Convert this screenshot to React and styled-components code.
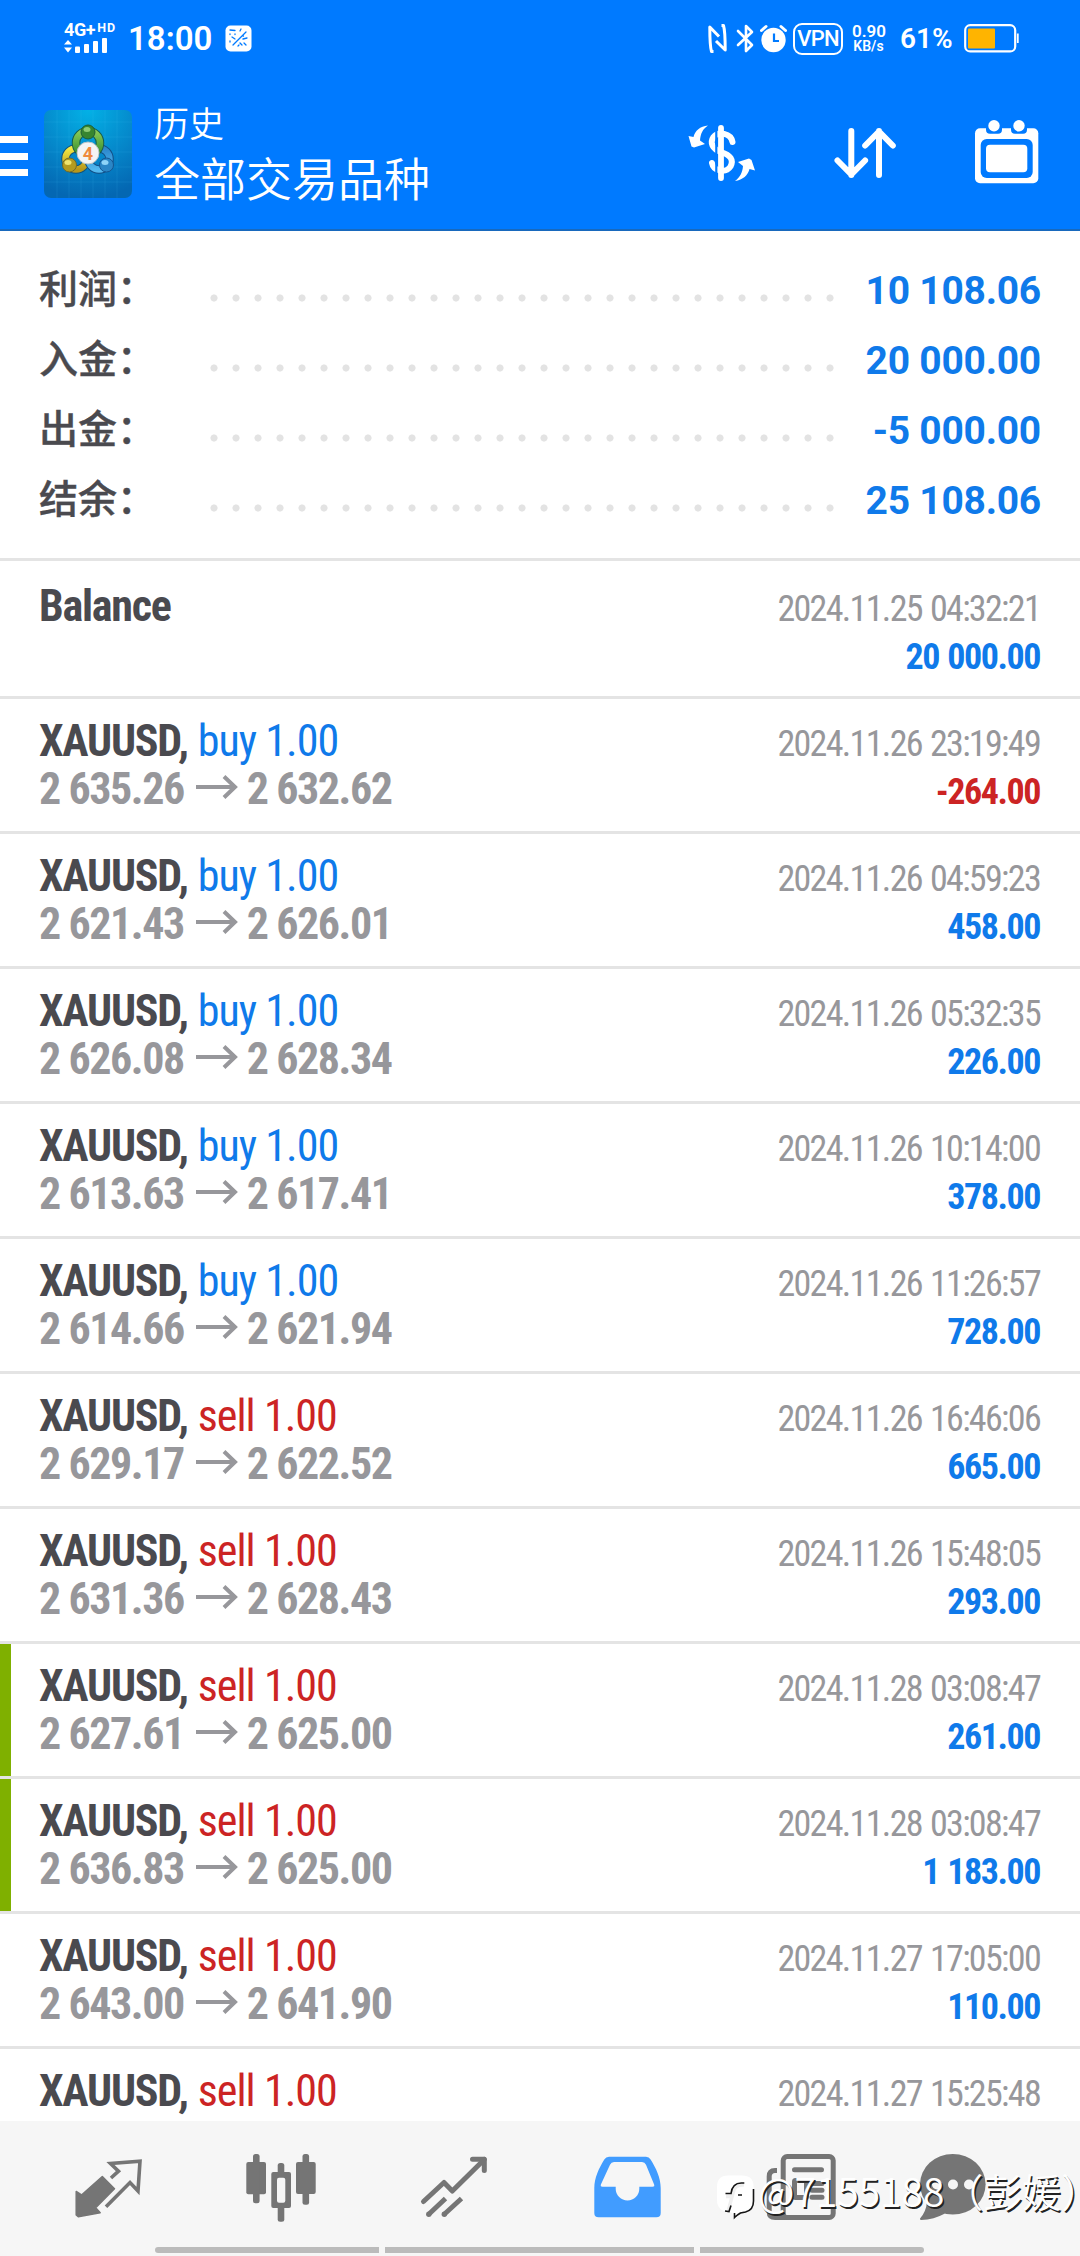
import React from "react";
import styled, { createGlobalStyle } from "styled-components";

const GlobalStyle = createGlobalStyle`
  * {
    box-sizing: border-box;
  }

  body {
    margin: 0;
    background: #fff;
    font-family: Roboto, "Noto Sans CJK SC", sans-serif;
  }

  svg {
    display: block;
    flex: none;
  }
`;

const Screen = styled.div`
  position: relative;
  display: flex;
  flex-direction: column;
  width: 1080px;
  height: 2256px;
  overflow: hidden;
  background: #fff;
`;

/* ---------- header ---------- */

const Header = styled.header`
  flex: none;
  height: 231px;
  background: #007aff;
  border-bottom: 2px solid #1869bd;
  color: #fff;
`;

const StatusBar = styled.div`
  display: flex;
  align-items: center;
  justify-content: space-between;
  height: 79px;
  padding: 0 61px 2px 64px;
`;

const StatusGroup = styled.div`
  display: flex;
  align-items: center;
`;

const Signal = styled.div`
  width: 54px;
  margin-right: 10px;
`;

const Network = styled.div`
  display: flex;
  align-items: flex-start;
  height: 14px;
  font-size: 18px;
  font-weight: 700;
  line-height: 14px;
  letter-spacing: -0.4px;
  white-space: nowrap;

  small {
    margin-left: 2px;
    font-size: 12.5px;
    line-height: 9px;
    letter-spacing: 0.9px;
  }
`;

const Clock = styled.span`
  width: 97px;
  font-size: 33px;
  font-weight: 600;
  line-height: 40px;
`;

const Vpn = styled.div`
  display: flex;
  align-items: center;
  justify-content: center;
  width: 50px;
  height: 32px;
  margin: 0 9px 0 6px;
  border: 2.5px solid #fff;
  border-radius: 9px;
  font-size: 22px;
  font-weight: 500;
  letter-spacing: -0.8px;
`;

const Speed = styled.div`
  width: 33px;
  margin-right: 15px;
  font-size: 17px;
  font-weight: 600;
  line-height: 16px;
  text-align: center;
  white-space: nowrap;

  small {
    display: block;
    font-size: 14px;
    line-height: 15px;
  }
`;

const Percent = styled.span`
  width: 64px;
  font-size: 28px;
  font-weight: 600;
`;

const Toolbar = styled.div`
  display: flex;
  align-items: center;
  height: 150px;
  padding-right: 38px;
`;

const MenuButton = styled.div`
  display: flex;
  flex-direction: column;
  justify-content: space-between;
  width: 28px;
  height: 41px;
  margin: 3px 16px 0 0;
  padding-top: 1px;

  i {
    height: 7px;
    background: #fff;
  }
`;

const Title = styled.div`
  flex: 1;
  margin-left: 22px;
  padding-bottom: 6px;
  font-family: "Noto Sans CJK SC", sans-serif;
  font-weight: 350;
`;

const Section = styled.div`
  font-size: 35px;
  line-height: 50px;
`;

const Filter = styled.div`
  font-size: 46px;
  line-height: 58px;
`;

const Actions = styled.div`
  display: flex;
  gap: 72px;
`;

/* ---------- summary ---------- */

const Summary = styled.section`
  flex: none;
  padding: 25px 39px 22px 39px;
  border-bottom: 3px solid #e4e4e4;
`;

const SummaryRow = styled.div`
  display: flex;
  align-items: center;
  height: 70px;
`;

const SummaryLabel = styled.span`
  width: 164px;
  padding-bottom: 10px;
  font-family: "Noto Sans CJK SC", sans-serif;
  font-size: 39px;
  font-weight: 500;
  line-height: 58px;
  color: #4a4a4f;
  -webkit-text-stroke: 0.4px #4a4a4f;
`;

const Dots = styled.span`
  width: 638px;
  height: 8px;
  margin-top: 13px;
  background: radial-gradient(circle, #e3e3e3 3.2px, transparent 3.9px) 0 0 / 22px 8px;
`;

const SummaryValue = styled.span`
  flex: 1;
  font-size: 39px;
  font-weight: 700;
  line-height: 70px;
  letter-spacing: -0.25px;
  text-align: right;
  white-space: nowrap;
  color: #0f7aea;
`;

/* ---------- deals ---------- */

const Deals = styled.section`
  flex: 1;
  min-height: 0;
  overflow: hidden;
  font-family: "Roboto Condensed", Roboto, sans-serif;
  font-stretch: 75%;
  line-height: 48px;
  white-space: nowrap;
`;

const Deal = styled.div`
  display: flex;
  align-items: baseline;
  justify-content: space-between;
  height: ${(props) => (props.$first ? 138 : 135)}px;
  padding: ${(props) => (props.$first ? 21 : 18)}px 40px 0 39px;
  border-bottom: 3px solid #e4e4e4;
  background: ${(props) =>
    props.$marked ? "linear-gradient(#7fb000, #7fb000) 0 0 / 11px 100% no-repeat" : "#fff"};
`;

const DealInfo = styled.div`
  font-size: 44px;
`;

const Symbol = styled.div`
  font-weight: 700;
  letter-spacing: -1.25px;
  color: #4a4a4f;

  span {
    margin-left: 1px;
    font-weight: 400;
    letter-spacing: -0.95px;
    color: ${(props) => (props.$side === "buy" ? "#0f7aea" : "#cc2424")};
  }
`;

const Prices = styled.div`
  display: flex;
  font-weight: 700;
  letter-spacing: -1.45px;
  color: #97979b;

  svg {
    margin: 10px 8px 0 11px;
  }
`;

const DealResult = styled.div`
  font-size: 36px;
  letter-spacing: -1.67px;
  word-spacing: 1.5px;
  text-align: right;
  color: #97979b;
`;

const Profit = styled.div`
  font-weight: 700;
  letter-spacing: -1.45px;
  color: ${(props) => (props.$loss ? "#cc2424" : "#0f7aea")};
`;

/* ---------- bottom ---------- */

const BottomBar = styled.nav`
  flex: none;
  height: 135px;
  background: #f6f6f6;
  color: #757575;
`;

const Tabs = styled.div`
  display: grid;
  grid-template-columns: repeat(5, 172px) 132px;
  column-gap: 1px;
  justify-items: center;
  height: 126px;
  padding: 27px 0 0 22px;
`;

const ScrollHint = styled.div`
  display: grid;
  grid-template-columns: 224px 309px 224px;
  column-gap: 6px;
  height: 6px;
  padding-left: 155px;

  i {
    background: #bbb;
  }
  i:first-child {
    border-radius: 3px 0 0 3px;
  }
  i:last-child {
    border-radius: 0 3px 3px 0;
  }
`;

const Watermark = styled.div`
  position: absolute;
  left: 714px;
  top: 2162px;
  display: flex;
  align-items: center;
  height: 56px;
  font-family: "Noto Sans CJK SC", sans-serif;
  font-size: 39px;
  font-weight: 350;
  line-height: 56px;
  white-space: nowrap;
  color: #fff;
  text-shadow: 1.5px 1.5px 0 #222;

  svg {
    margin: 10px 2px 0 0;
  }

  /* half-width closing bracket, so it stays inside the screen */
  span {
    font-feature-settings: "halt";
  }
`;

const summary = [
  { label: "利润：", value: "10 108.06" },
  { label: "入金：", value: "20 000.00" },
  { label: "出金：", value: "-5 000.00" },
  { label: "结余：", value: "25 108.06" },
];

const deals = [
  { symbol: "Balance", date: "2024.11.25 04:32:21", profit: "20 000.00" },
  { side: "buy", open: "2 635.26", close: "2 632.62", date: "2024.11.26 23:19:49", profit: "-264.00" },
  { side: "buy", open: "2 621.43", close: "2 626.01", date: "2024.11.26 04:59:23", profit: "458.00" },
  { side: "buy", open: "2 626.08", close: "2 628.34", date: "2024.11.26 05:32:35", profit: "226.00" },
  { side: "buy", open: "2 613.63", close: "2 617.41", date: "2024.11.26 10:14:00", profit: "378.00" },
  { side: "buy", open: "2 614.66", close: "2 621.94", date: "2024.11.26 11:26:57", profit: "728.00" },
  { side: "sell", open: "2 629.17", close: "2 622.52", date: "2024.11.26 16:46:06", profit: "665.00" },
  { side: "sell", open: "2 631.36", close: "2 628.43", date: "2024.11.26 15:48:05", profit: "293.00" },
  { side: "sell", open: "2 627.61", close: "2 625.00", date: "2024.11.28 03:08:47", profit: "261.00", marked: true },
  { side: "sell", open: "2 636.83", close: "2 625.00", date: "2024.11.28 03:08:47", profit: "1 183.00", marked: true },
  { side: "sell", open: "2 643.00", close: "2 641.90", date: "2024.11.27 17:05:00", profit: "110.00" },
  { side: "sell", date: "2024.11.27 15:25:48" },
];

/* ---------- icons ---------- */

const SignalBars = () => (
  <svg width="54" height="17" viewBox="0 0 54 17" fill="#fff">
    <path d="M0 7.500 4 3l4 4.500zM0 10.500h8L4 15.500z" />
    <rect x="11" y="9.500" width="5" height="6.500" rx="1" />
    <rect x="20" y="7" width="5" height="9" rx="1" />
    <rect x="29" y="4" width="5" height="12" rx="1" />
    <rect x="38" y="1" width="5" height="15" rx="1" />
  </svg>
);

const NoticeIcon = () => (
  <svg width="27" height="27" viewBox="0 0 27 27">
    <rect x="0.500" y="0.500" width="26" height="26" rx="5" fill="#fff" />
    <g stroke="#007aff" strokeWidth="1.300" fill="none" strokeLinecap="round">
      <path d="M5 5l5 .5M16 4l-1 2M21 7l-8 8-5 5M22 13l-4 1M7 12l3 2M15 18l2 2M19 18l2 2" />
      <path d="M5 9v.5M5 16v1M10 9v.5M18 11h.5M13 21l1-1" />
    </g>
  </svg>
);

const NfcIcon = () => (
  <svg width="19" height="29" viewBox="0 0 19 29" fill="none" stroke="#fff" strokeWidth="3" strokeLinejoin="round">
    <path d="M5.500 27.500h-2C1.800 22 1.800 8 1.800 3L11 12.500" />
    <path d="M13.500 1.500h2c1.700 5.500 1.700 19.500 1.700 24.500L8 17" />
  </svg>
);

const BluetoothIcon = () => (
  <svg width="19" height="29" viewBox="0 0 19 29" fill="none" stroke="#fff" strokeWidth="2.600" strokeLinejoin="round" strokeLinecap="round">
    <path d="M2 7l14 14-6 6V2l6 6L2 21" />
  </svg>
);

const AlarmIcon = () => (
  <svg width="27" height="29" viewBox="0 0 27 29">
    <circle cx="13.500" cy="16" r="12.200" fill="#fff" />
    <path d="M1.500 6.500 6 2.500M25.500 6.500 21 2.500" stroke="#fff" strokeWidth="3" strokeLinecap="round" />
    <path d="M14 9.500V17h5" stroke="#007aff" strokeWidth="2.200" fill="none" />
  </svg>
);

const BatteryIcon = () => (
  <svg width="55" height="29" viewBox="0 0 55 29">
    <rect x="1.200" y="1.200" width="50" height="26.200" rx="5" fill="none" stroke="#fff" strokeWidth="2.200" />
    <rect x="4" y="4.500" width="27" height="20" rx="1" fill="#ffb400" />
    <path d="M53.800 9.500v9.500" stroke="#fff" strokeWidth="1.800" />
  </svg>
);

const Logo = () => (
  <svg width="88" height="88" viewBox="0 0 88 88">
    <defs>
      <radialGradient id="logoBg" cx="0.500" cy="0" r="1">
        <stop offset="0" stopColor="#03b1e6" />
        <stop offset="0.600" stopColor="#0584c8" />
        <stop offset="1" stopColor="#0467b2" />
      </radialGradient>
      <linearGradient id="green" x1="0" y1="0" x2="0" y2="1">
        <stop offset="0" stopColor="#8acb58" />
        <stop offset="1" stopColor="#318b2d" />
      </linearGradient>
      <linearGradient id="yellow" x1="0" y1="0" x2="0" y2="1">
        <stop offset="0" stopColor="#f3e843" />
        <stop offset="1" stopColor="#b8971a" />
      </linearGradient>
      <linearGradient id="blue" x1="0" y1="0" x2="0" y2="1">
        <stop offset="0" stopColor="#2b86cc" />
        <stop offset="1" stopColor="#52b8ef" />
      </linearGradient>
    </defs>
    <rect width="88" height="88" rx="7" fill="url(#logoBg)" />
    <path
      d="M13 0v88M25 0v88M37 0v88M49 0v88M61 0v88M73 0v88M0 12h88M0 27h88M0 42h88M0 57h88M0 72h88"
      stroke="#5ccdf5"
      strokeOpacity="0.120"
    />
    <g fill="none">
      <circle cx="32" cy="49" r="10.500" stroke="#12537c" strokeWidth="8.500" />
      <circle cx="32" cy="49" r="10.500" stroke="url(#yellow)" strokeWidth="6.500" />
      <circle cx="55" cy="49" r="10.500" stroke="#124f86" strokeWidth="8.500" />
      <circle cx="55" cy="49" r="10.500" stroke="url(#blue)" strokeWidth="6.500" />
      <circle cx="44" cy="33" r="12" stroke="#165c4c" strokeWidth="8.500" />
      <circle cx="44" cy="33" r="12" stroke="url(#green)" strokeWidth="6.500" />
    </g>
    <circle cx="44" cy="22" r="7" fill="#37852f" stroke="#1c5e37" />
    <ellipse cx="43" cy="19.500" rx="3.500" ry="2.500" fill="#8cca73" />
    <circle cx="25.500" cy="55" r="7" fill="#b29b20" stroke="#6d6a2d" />
    <ellipse cx="24" cy="52.500" rx="3.500" ry="2.500" fill="#eee36d" />
    <circle cx="62.500" cy="55" r="7" fill="#2a86c6" stroke="#155590" />
    <ellipse cx="61" cy="52.500" rx="3.500" ry="2.500" fill="#8ed4f8" />
    <circle cx="44" cy="43" r="11" fill="#f4f4f4" stroke="#b9c4c8" />
    <text x="44" y="49.500" textAnchor="middle" fontFamily="Roboto" fontSize="18" fontWeight="700" fill="#ef8a3c">
      4
    </text>
  </svg>
);

const CurrencyIcon = () => (
  <svg width="70" height="70" viewBox="2 0 70 70">
    <path
      d="M46.500 23C45 14 32 12 27.500 18c-4 6-1 12 7.500 15 9.500 3 13 8 9.500 14.500-4.500 7-17 5-18.500-3.500"
      fill="none"
      stroke="#fff"
      strokeWidth="6"
      strokeLinecap="round"
    />
    <path d="M30.300 3v62" stroke="#007aff" strokeWidth="2.200" />
    <path d="M35 9v50" stroke="#fff" strokeWidth="5.800" strokeLinecap="round" />
    <path d="M22 6.500C14 7 9 12 7.500 18L2.500 17l3 10.500 2.500 1 11-3.500-5-3.500C14.500 15 16.500 10 22 6.500z" fill="#fff" />
    <path d="M49 62c8-1 13-6 14.500-12l5.500 1.500L65.500 41l-2.500-1.500L52 43l5 4C56.500 53 54.500 58 49 62z" fill="#fff" />
  </svg>
);

const SortIcon = () => (
  <svg width="70" height="70" viewBox="0 0 70 70" fill="none" stroke="#fff" strokeWidth="6" strokeLinecap="round" strokeLinejoin="round">
    <path d="M21.300 12v44M7.500 41.500l13.800 14 13.800-14" />
    <path d="M49 56V12M35.200 26.500 49 12.500l13.800 14" />
  </svg>
);

const CalendarIcon = () => (
  <svg width="70" height="70" viewBox="0 0 70 70" overflow="visible">
    <rect x="3" y="9.300" width="63.300" height="55" rx="5" fill="#fff" />
    <g fill="#007aff">
      <rect x="8.700" y="20" width="52" height="39" rx="6" />
      <rect x="14" y="4" width="16" height="10.700" rx="4" />
      <rect x="39" y="4" width="16" height="10.700" rx="4" />
    </g>
    <circle cx="22" cy="6.800" r="5.700" fill="#fff" />
    <circle cx="47" cy="6.800" r="5.700" fill="#fff" />
    <rect x="14" y="25.700" width="41.300" height="27.600" rx="4" fill="#fff" />
  </svg>
);

const PriceArrow = () => (
  <svg width="44" height="24" viewBox="0 0 44 24" fill="none" stroke="#97979b" strokeWidth="4">
    <path d="M1 12h39M29 1.500 40 12 29 22.500" />
  </svg>
);

const TabIcon = ({ children }) => (
  <svg width="80" height="80" viewBox="0 0 80 80" fill="currentColor">
    {children}
  </svg>
);

const QuotesIcon = () => (
  <TabIcon>
    <path
      d="M34.300 28.500 46.500 40.800 27.700 59.700 32.200 64.700 10.300 68.800 8.200 67V43.500L13.500 47z"
      stroke="currentColor"
      strokeWidth="1.500"
      strokeLinejoin="round"
    />
    <path d="M43 30l7.500-6.800-8-7.700L72 13.200l-2 29.800-8-8.500L38 58.700" fill="none" stroke="currentColor" strokeWidth="3.600" />
  </TabIcon>
);

const ChartIcon = () => (
  <TabIcon>
    <rect x="5.300" y="14" width="19.700" height="32.300" rx="2" />
    <rect x="12" y="6" width="6.600" height="49.300" rx="2.500" />
    <rect x="61.500" y="6" width="6.600" height="50.700" rx="2.500" />
    <rect x="55" y="14" width="19.700" height="32" rx="2" />
    <rect x="36.700" y="15" width="6.600" height="58.700" rx="2.500" />
    <rect x="30.300" y="24" width="19.700" height="36" rx="2" />
    <rect x="36" y="29.700" width="8.300" height="25" rx="2" fill="#f6f6f6" />
  </TabIcon>
);

const TradeIcon = () => (
  <TabIcon>
    <g fill="none" stroke="currentColor" strokeWidth="5" strokeLinejoin="round">
      <path d="M9.500 53.500 30 34.500 38.300 43 70.300 11.500" strokeLinecap="round" />
      <path d="M58.500 11.300h11.800v11.300" strokeLinecap="round" />
      <path d="M14.500 66.500 31.500 50.500M30 66.500 47.500 50.500" />
    </g>
    <circle cx="14.800" cy="66.300" r="2.700" />
    <circle cx="30.300" cy="66.300" r="2.700" />
  </TabIcon>
);

const HistoryIcon = () => (
  <TabIcon>
    <path
      fill="#419cff"
      fillRule="evenodd"
      d="M22 8.700h37q3 0 4.600 2.800C69 20 73.700 30 73.700 40v25q0 4.300-4.300 4.300H11.600q-4.300 0-4.300-4.300V40c0-10 4.700-20 10-28.500Q19 8.700 22 8.700zM27 14q-2.800 0-4 2.800l-9 19.400q-1 2.500 1.500 2.500h13.200v2a11.800 11.800 0 0 0 23.600 0v-2h13.200q2.500 0 1.500-2.500L59 16.800Q57.800 14 55 14z"
    />
  </TabIcon>
);

const NewsIcon = () => (
  <TabIcon>
    <g fill="none" stroke="currentColor" strokeWidth="5">
      <path d="M17 22.500h-2q-5.800 0-5.800 6V64q0 5.500 6 5.500h13" />
      <rect x="23.200" y="8.500" width="50" height="61" rx="4" />
      <path d="M34.500 21.700h27M52 35.500h10M52 42.300h10M52 49.200h10" strokeLinecap="round" />
      <rect x="34.500" y="32.500" width="12" height="17" rx="1" />
    </g>
  </TabIcon>
);

const ChatIcon = () => (
  <TabIcon>
    <ellipse cx="39.800" cy="36.300" rx="32.800" ry="30.300" />
    <path d="M14 54q-1 10-7 16.500 0 1.500 1 1.500 13-.500 24-6.500z" />
    <g fill="#f6f6f6">
      <circle cx="24" cy="36.500" r="5" />
      <circle cx="40" cy="36.500" r="5" />
      <circle cx="56" cy="36.500" r="5" />
    </g>
  </TabIcon>
);

const WatermarkIcon = () => (
  <svg width="42" height="50" viewBox="0 0 42 50">
    <path d="M14 5.500h14q11.500 0 11.500 11v13q0 9-8 11.500l-6 1.500-5 5-3-5Q3 42 3 30V17Q3 5.500 14 5.500z" fill="#fff" />
    <g fill="none">
      <path d="M30 15q-10-1-11 8l-4.500 17M12 26.500h6" stroke="#efefef" strokeWidth="3.500" />
      <path
        d="M30.300 13h-3q-9 0-10.300 10.500h-5.500M24 25h4M11 41l4 .5 2-6M39.500 19v12q0 9-8 11l-5 1q-3.500 2-6 4.500V43"
        stroke="#151515"
        strokeWidth="1.600"
      />
    </g>
  </svg>
);

function App() {
  return (
    <Screen>
      <GlobalStyle />
      <Header>
        <StatusBar>
          <StatusGroup>
            <Signal>
              <Network>
                4G+<small>HD</small>
              </Network>
              <SignalBars />
            </Signal>
            <Clock>18:00</Clock>
            <NoticeIcon />
          </StatusGroup>
          <StatusGroup>
            <NfcIcon />
            <svg width="9" height="1" />
            <BluetoothIcon />
            <svg width="5" height="1" />
            <AlarmIcon />
            <Vpn>VPN</Vpn>
            <Speed>
              0.90<small>KB/s</small>
            </Speed>
            <Percent>61%</Percent>
            <BatteryIcon />
          </StatusGroup>
        </StatusBar>
        <Toolbar>
          <MenuButton>
            <i />
            <i />
            <i />
          </MenuButton>
          <Logo />
          <Title>
            <Section>历史</Section>
            <Filter>全部交易品种</Filter>
          </Title>
          <Actions>
            <CurrencyIcon />
            <SortIcon />
            <CalendarIcon />
          </Actions>
        </Toolbar>
      </Header>

      <Summary>
        {summary.map((item) => (
          <SummaryRow key={item.label}>
            <SummaryLabel>{item.label}</SummaryLabel>
            <Dots />
            <SummaryValue>{item.value}</SummaryValue>
          </SummaryRow>
        ))}
      </Summary>

      <Deals>
        {deals.map((deal, index) => (
          <Deal key={index} $first={index === 0} $marked={deal.marked}>
            <DealInfo>
              <Symbol $side={deal.side}>
                {deal.symbol || "XAUUSD,"} {deal.side && <span>{deal.side} 1.00</span>}
              </Symbol>
              {deal.open && (
                <Prices>
                  {deal.open}
                  <PriceArrow />
                  {deal.close}
                </Prices>
              )}
            </DealInfo>
            <DealResult>
              <div>{deal.date}</div>
              {deal.profit && <Profit $loss={deal.profit.startsWith("-")}>{deal.profit}</Profit>}
            </DealResult>
          </Deal>
        ))}
      </Deals>

      <BottomBar>
        <Tabs>
          <QuotesIcon />
          <ChartIcon />
          <TradeIcon />
          <HistoryIcon />
          <NewsIcon />
          <ChatIcon />
        </Tabs>
        <ScrollHint>
          <i />
          <i />
          <i />
        </ScrollHint>
      </BottomBar>

      <Watermark>
        <WatermarkIcon />
        @7155188（彭媛<span>）</span>
      </Watermark>
    </Screen>
  );
}

export default App;
